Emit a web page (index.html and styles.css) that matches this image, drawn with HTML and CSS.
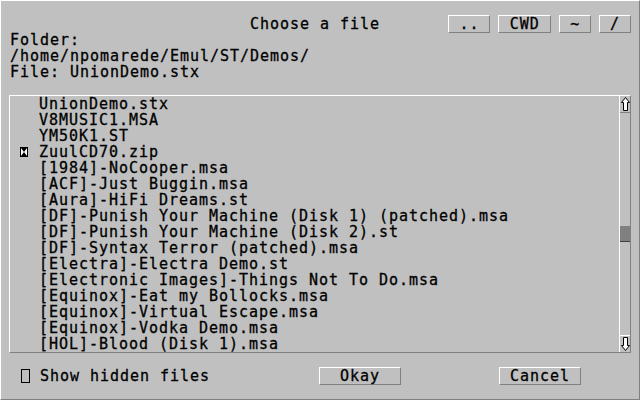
FILE: index.html
```html
<!DOCTYPE html>
<html>
<head>
<meta charset="utf-8">
<link rel="stylesheet" href="styles.css">
</head>
<body>
<div class="dialog">
  <div class="header">
    <div class="title">Choose a file</div>
    <div class="btn btn-up">..</div>
    <div class="btn btn-cwd">CWD</div>
    <div class="btn btn-home">~</div>
    <div class="btn btn-root">/</div>
  </div>
  <div class="info">
    <div class="line">Folder:</div>
    <div class="line">/home/npomarede/Emul/ST/Demos/</div>
    <div class="line">File: UnionDemo.stx</div>
  </div>
  <div class="list">
    <div class="items">
      <div class="item"><span class="icon"></span><span class="name">UnionDemo.stx</span></div>
      <div class="item"><span class="icon"></span><span class="name">V8MUSIC1.MSA</span></div>
      <div class="item"><span class="icon"></span><span class="name">YM50K1.ST</span></div>
      <div class="item"><span class="icon"><svg width="8" height="10" viewBox="0 0 8 10"><rect x="0.5" y="0.5" width="7" height="9" fill="#fff" stroke="#000"/><polygon points="1,1 7,1 4,5" fill="#000"/><polygon points="1,9 7,9 4,5" fill="#000"/></svg></span><span class="name">ZuulCD70.zip</span></div>
      <div class="item"><span class="icon"></span><span class="name">[1984]-NoCooper.msa</span></div>
      <div class="item"><span class="icon"></span><span class="name">[ACF]-Just Buggin.msa</span></div>
      <div class="item"><span class="icon"></span><span class="name">[Aura]-HiFi Dreams.st</span></div>
      <div class="item"><span class="icon"></span><span class="name">[DF]-Punish Your Machine (Disk 1) (patched).msa</span></div>
      <div class="item"><span class="icon"></span><span class="name">[DF]-Punish Your Machine (Disk 2).st</span></div>
      <div class="item"><span class="icon"></span><span class="name">[DF]-Syntax Terror (patched).msa</span></div>
      <div class="item"><span class="icon"></span><span class="name">[Electra]-Electra Demo.st</span></div>
      <div class="item"><span class="icon"></span><span class="name">[Electronic Images]-Things Not To Do.msa</span></div>
      <div class="item"><span class="icon"></span><span class="name">[Equinox]-Eat my Bollocks.msa</span></div>
      <div class="item"><span class="icon"></span><span class="name">[Equinox]-Virtual Escape.msa</span></div>
      <div class="item"><span class="icon"></span><span class="name">[Equinox]-Vodka Demo.msa</span></div>
      <div class="item"><span class="icon"></span><span class="name">[HOL]-Blood (Disk 1).msa</span></div>
    </div>
    <div class="scrollbar">
      <div class="arrow arrow-up"><svg width="9" height="14" viewBox="0 0 9 14"><polygon points="4.5,0.5 8.5,5.5 6.5,5.5 6.5,13.5 2.5,13.5 2.5,5.5 0.5,5.5" fill="#fff" stroke="#000"/></svg></div>
      <div class="track"><div class="thumb" style="margin-top:113px"></div></div>
      <div class="arrow arrow-down"><svg width="9" height="14" viewBox="0 0 9 14"><polygon points="4.5,13.5 8.5,8.5 6.5,8.5 6.5,0.5 2.5,0.5 2.5,8.5 0.5,8.5" fill="#fff" stroke="#000"/></svg></div>
    </div>
  </div>
  <div class="footer">
    <span class="check"></span>
    <span class="check-label">Show hidden files</span>
    <div class="btn btn-ok">Okay</div>
    <div class="btn btn-cancel">Cancel</div>
  </div>
</div>
</body>
</html>
```
FILE: styles.css
```css
html, body {
  margin: 0;
  padding: 0;
  background: #c0c0c0;
}
.dialog {
  box-sizing: border-box;
  width: 640px;
  height: 400px;
  background: #c0c0c0;
  border-top: 1px solid #fff;
  border-left: 1px solid #fff;
  border-right: 1px solid #808080;
  border-bottom: 1px solid #808080;
  padding: 15px 8px 0 8px;
  font-family: "DejaVu Sans Mono", monospace;
  font-size: 15px;
  letter-spacing: 0.97px;
  line-height: 16px;
  color: #000;
  -webkit-text-stroke: 0.3px #000;
  display: flex;
  flex-direction: column;
}
.header {
  display: flex;
  align-items: center;
  height: 16px;
}
.title {
  margin-left: 241px;
  width: 199px;
  white-space: pre;
}
.btn {
  box-sizing: border-box;
  height: 18px;
  border-top: 1px solid #fff;
  border-left: 1px solid #fff;
  border-right: 1px solid #808080;
  border-bottom: 1px solid #808080;
  text-align: center;
  line-height: 16px;
  white-space: pre;
}
.btn-up { width: 42px; }
.btn-cwd { width: 53px; margin-left: 8px; }
.btn-home { width: 32px; margin-left: 8px; }
.btn-root { width: 32px; margin-left: 8px; }
.info {
  padding-left: 1px;
}
.line {
  height: 16px;
  white-space: pre;
}
.list {
  box-sizing: border-box;
  margin-top: 15px;
  height: 258px;
  border-top: 1px solid #fff;
  border-left: 1px solid #fff;
  border-right: 1px solid #808080;
  border-bottom: 1px solid #808080;
  display: flex;
}
.items {
  flex: 1;
  overflow: hidden;
}
.item {
  height: 16px;
  display: flex;
  align-items: center;
  white-space: pre;
}
.icon {
  width: 8px;
  height: 10px;
  margin-left: 10px;
  margin-right: 11px;
  display: flex;
}
.scrollbar {
  width: 11px;
  box-sizing: border-box;
  border-left: 1px solid #fff;
  display: flex;
  flex-direction: column;
}
.arrow {
  height: 16px;
  display: flex;
  align-items: center;
  justify-content: center;
}
.arrow-up {
  border-bottom: 1px solid #808080;
}
.arrow-down {
  border-top: 1px solid #fff;
}
.track {
  flex: 1;
}
.thumb {
  height: 15px;
  background: #808080;
  border-bottom: 1px solid #404040;
}
.footer {
  margin-top: 14px;
  height: 18px;
  display: flex;
  align-items: center;
}
.check {
  box-sizing: border-box;
  width: 9px;
  height: 14px;
  border: 1px solid #000;
  margin-left: 12px;
}
.check-label {
  margin-left: 10px;
  width: 279px;
  white-space: pre;
}
.btn-ok { width: 82px; }
.btn-cancel { width: 82px; margin-left: 98px; }
```
